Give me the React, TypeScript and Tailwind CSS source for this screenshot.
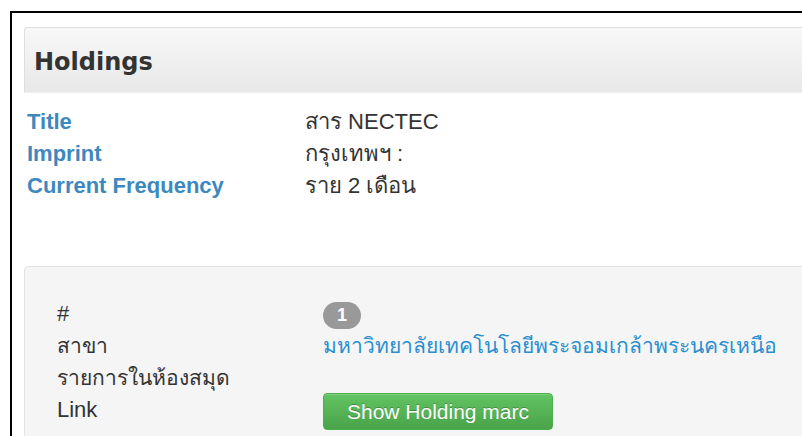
import React from "react"

const record = [
  { label: "Title", value: "สาร NECTEC" },
  { label: "Imprint", value: "กรุงเทพฯ :" },
  { label: "Current Frequency", value: "ราย 2 เดือน" },
]

export default function App() {
  return (
    <div className="w-[802px] h-[436px] overflow-hidden bg-white" style={{ fontFamily: '"Liberation Sans", Tahoma, sans-serif' }}>
      <div className="ml-[10px] mt-[11px] w-[860px] h-[460px] border-t-2 border-l-2 border-black pl-[12px] pt-[14px] text-[#333] text-[22px] leading-[32px]">
        {/* panel heading */}
        <div className="h-[66px] flex items-center pl-[9px] pt-[3px] rounded-tl-[4px] border border-[#dedede] border-b-[#efefef] bg-gradient-to-b from-[#f8f8f8] to-[#e8e8e8]">
          <h3 className="font-bold text-[24px] text-[#333]" style={{ fontFamily: '"DejaVu Sans", Verdana, sans-serif' }}>
            Holdings
          </h3>
        </div>

        <dl className="grid grid-cols-[278px_1fr] pl-[3px] pt-[13px]">
          {record.map((r) => (
            <React.Fragment key={r.label}>
              <dt className="font-bold text-[#3d88bf]">{r.label}</dt>
              <dd>{r.value}</dd>
            </React.Fragment>
          ))}
        </dl>

        {/* holding item */}
        <div className="mt-[64px] rounded-[4px] border border-[#e3e3e3] bg-[#f5f5f5] pl-[32px] pt-[31px] h-[200px]">
          <dl className="grid grid-cols-[266px_1fr]">
            <dt>#</dt>
            <dd className="flex items-center h-[32px]">
              <span className="inline-flex items-center justify-center w-[38px] h-[27px] rounded-full bg-[#999] text-white font-bold text-[18px] mt-[2px]">
                1
              </span>
            </dd>
            <dt className="text-[21px]">สาขา</dt>
            <dd>
              <a className="text-[#2a8fd0] text-[21px]" href="#">มหาวิทยาลัยเทคโนโลยีพระจอมเกล้าพระนครเหนือ</a>
            </dd>
            <dt className="text-[21px]">รายการในห้องสมุด</dt>
            <dd></dd>
            <dt>Link</dt>
            <dd className="flex items-center h-[32px]">
              <button className="w-[230px] h-[37px] mt-[3px] rounded-[4px] border border-[#4cae4c] bg-gradient-to-b from-[#62c462] to-[#4aa34a] text-white text-[21px] [text-shadow:0_-1px_0_rgba(0,0,0,0.25)] shadow-[inset_0_1px_0_rgba(255,255,255,0.2)]">
                Show Holding marc
              </button>
            </dd>
          </dl>
        </div>
      </div>
    </div>
  )
}
